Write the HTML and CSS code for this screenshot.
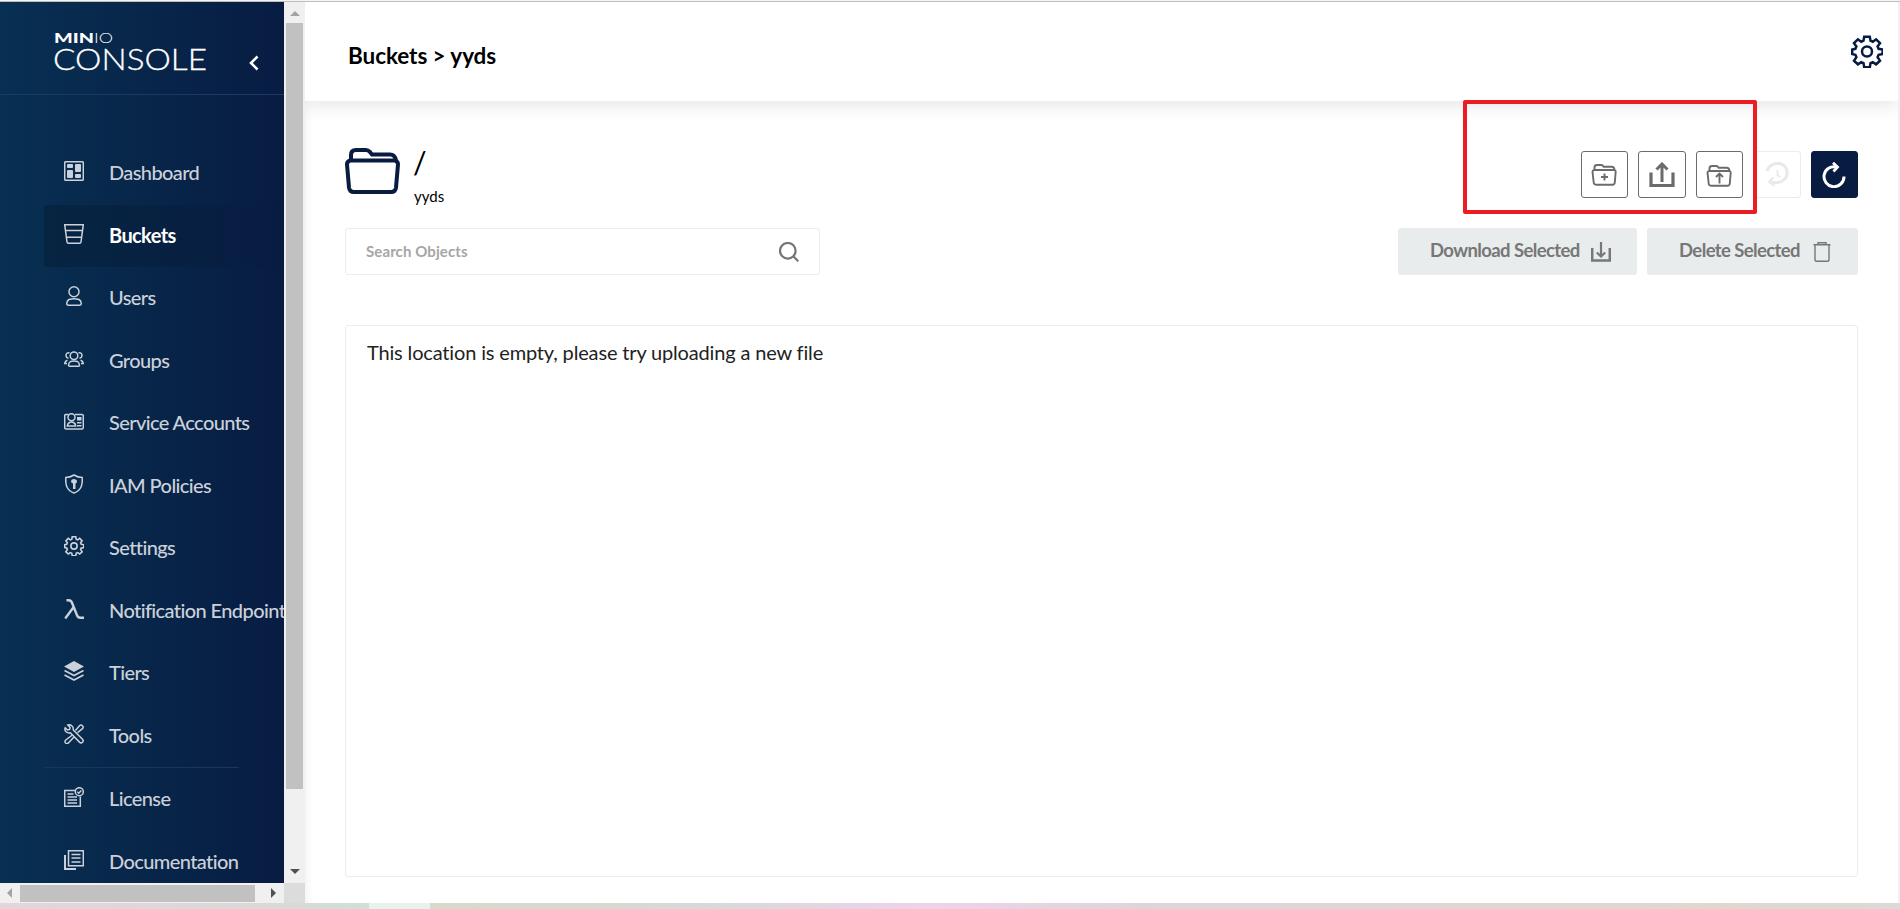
FILE: index.html
```html
<!DOCTYPE html>
<html lang="en">
<head>
  <meta charset="UTF-8" />
  <meta name="viewport" content="width=device-width, initial-scale=1.0" />
  <title>MinIO Console</title>
  <link rel="stylesheet" href="styles.css">
</head>
<body>
  <svg class="defs">
    <symbol id="gear" viewBox="0 0 32 32">
      <path d="M13.2 1.2h5.6l.7 4 2.3 1 3.3-2.4 3.9 3.9-2.4 3.3 1 2.3 4 .7v4.6l-4 .7-1 2.3 2.4 3.7-3.9 3.5-3.3-2.2-2.3 1-.7 4.2h-5.6l-.7-4.2-2.3-1-3.3 2.2L3 25.300l2.400-3.700-1-2.300-3.200-.7v-4.600l3.200-.7 1-2.300L3 7.700l3.900-3.900 3.300 2.400 2.300-1z"/>
      <circle cx="16" cy="16" r="5"/>
    </symbol>
    <symbol id="folder" viewBox="0 0 55 46">
      <path d="M6 13V7q0-5 5-5h10q2 0 4 2l2 2.500h18q5 0 6 6"/>
      <path d="M5 12.500h45q3 1 3 4l-2 23q-.5 4.500-5 4.500H9q-4.500 0-5-4.500l-2-23q0-3 3-4z"/>
    </symbol>
  </svg>

  <div class="app">
    <div class="sidebar">
      <div class="menu">
        <div class="logo">
          <svg width="152" height="40" viewBox="0 0 152 40">
            <text class="logoBold" x="-1" y="11" textLength="40" lengthAdjust="spacingAndGlyphs">MIN</text>
            <text class="logoThin" x="39" y="11" textLength="19" lengthAdjust="spacingAndGlyphs">IO</text>
            <text class="logoText" x="-2" y="38" textLength="154" lengthAdjust="spacingAndGlyphs">CONSOLE</text>
          </svg>
          <svg class="collapse" width="10" height="16" viewBox="0 0 10 16"><path d="M8.500 1.500 2 8l6.500 6.500"/></svg>
        </div>
        <div class="items">
          <div class="item">
            <svg viewBox="0 0 20 20"><rect x=".7" y=".7" width="18.600" height="18.600" rx="1"/><g class="fill"><rect x="3" y="3" width="6" height="4" rx="1"/><rect x="3" y="9" width="6" height="8" rx="1"/><rect x="11" y="3" width="6" height="8" rx="1"/><rect x="11" y="13" width="6" height="4" rx="1"/></g></svg>
            <span>Dashboard</span>
          </div>
          <div class="item active">
            <svg viewBox="0 0 20 20"><path d="M.7.700h18.600L17 18q-.2 1.300-1.500 1.300h-11Q3.200 19.300 3 18zM1.500 6.500h17M2.300 13.300h15.400"/></svg>
            <span>Buckets</span>
          </div>
          <div class="item">
            <svg viewBox="0 0 20 20"><circle cx="10" cy="5.800" r="5"/><path d="M5 13.500q5-1.500 10 0 2 1.200 2.300 4 0 1.700-1.700 1.700H4.400q-1.700 0-1.700-1.700.3-2.800 2.300-4z"/></svg>
            <span>Users</span>
          </div>
          <div class="item">
            <svg viewBox="0 0 20 20"><circle cx="10" cy="6.700" r="3.800"/><path d="M6.500 12.500q3.500-1 7 0 1.800 1.300 2 3.700 0 1-1 1h-9q-1 0-1-1 .2-2.400 2-3.700zM5.500 3.800q-3.500-.5-3.500 3 .3 2 2.500 2.400M14.500 3.800q3.500-.5 3.500 3-.3 2-2.500 2.400M3.500 11.300Q.8 12 .7 14.500H3M16.500 11.300q2.700.7 2.800 3.200H17"/></svg>
            <span>Groups</span>
          </div>
          <div class="item">
            <svg viewBox="0 0 20 20"><path d="M4.500 3.500H2Q.7 3.500.7 4.800v11.900q0 1.300 1.300 1.300h16q1.300 0 1.300-1.300V5q0-1.500-1.300-1.500h-7"/><circle cx="7.500" cy="6.200" r="3.500"/><path d="M5.500 11.500q2-.8 4 0 2 1 2.200 3.500h-8.400q.2-2.500 2.200-3.500z"/><path class="fill" d="M13 6h4.500v3.500H13zM13 11h4.500v1.500H13zM13 14h4.500v1.500H13z"/></svg>
            <span>Service Accounts</span>
          </div>
          <div class="item">
            <svg viewBox="0 0 20 20"><path d="M10 1Q6 3.400 1.800 3.500C1.300 12 3.300 16.500 10 19c6.700-2.500 8.700-7 8.200-15.500Q14 3.400 10 1z"/><path class="fill" d="M9 15V9.500Q7 9 7 7.200T9.500 5q3.500 0 3.500 2.500Q13 9 11.500 9.500V15z"/></svg>
            <span>IAM Policies</span>
          </div>
          <div class="item">
            <svg class="gearSmall"><use href="#gear"/></svg>
            <span>Settings</span>
          </div>
          <div class="item">
            <svg viewBox="0 0 20 20"><path class="thick" d="M2.500 1.200h2.200q2.300 0 3.300 2.500l5 12.500q1 2.500 3.200 2.500H20M9.700 8 1.200 19.500"/></svg>
            <span>Notification Endpoints</span>
          </div>
          <div class="item">
            <svg viewBox="0 0 20 20"><path class="fill" d="M10 0 20 5.500 10 11 0 5.500z"/><path d="m.5 9.500 9.500 5 9.500-5M.5 14l9.500 5 9.500-5" stroke-width="1.700"/></svg>
            <span>Tiers</span>
          </div>
          <div class="item">
            <svg viewBox="0 0 20 20"><path d="m6.300 8.800 9.200 9.300q1.500 1.500 3 .1 1.400-1.500 0-3L9.300 6Q9.600 3 7.500 1.500 5.500.3 3.800 1l2.300 2.500-.5 2-2 .5L1.200 3.800q-.8 2 .6 3.700 1.800 1.800 4.500 1.300z"/><path d="M11.500 6.500 15.500 1.700q1.500-1.500 3 0 1.400 1.300 0 3L13.500 8.700M8.300 11l-6.500 5q-1.700 1.500-.2 3 1.600 1.200 3-.3L10 13"/></svg>
            <span>Tools</span>
          </div>
          <div class="divider"></div>
          <div class="item">
            <svg viewBox="0 0 20 20"><path d="M11 3.500H.7v15.800h15.600V9.500"/><circle cx="15.300" cy="4.700" r="4"/><path d="m13.300 4.700 1.500 1.500 2.500-2.700M3.500 7h6M3.500 10h9.500M3.500 13h9.500M3.500 16h9.500"/></svg>
            <span>License</span>
          </div>
          <div class="item">
            <svg viewBox="0 0 20 20"><path d="M4.500.7h14.800v15.100H4.500zM7.500 4.500h9M7.500 8h9M7.500 12h9"/><path d="M1 5v14h11" stroke-width="2"/></svg>
            <span>Documentation</span>
          </div>
        </div>
      </div>
      <div class="scrollY">
        <i class="arrow up"></i>
        <div class="thumbY"></div>
        <i class="arrow down"></i>
      </div>
      <div class="scrollX">
        <i class="arrow left"></i>
        <div class="thumbX"></div>
        <i class="arrow right"></i>
      </div>
      <div class="corner"></div>
    </div>

    <div class="main">
      <div class="header">
        <h1>Buckets &gt; yyds</h1>
        <svg class="gearBig"><use href="#gear"/></svg>
      </div>
      <div class="content">
        <div class="titleRow">
          <svg class="bigFolder"><use href="#folder"/></svg>
          <div class="path">
            <div class="slash">/</div>
            <div class="bucket">yyds</div>
          </div>
          <div class="actions">
            <button class="iconBtn"><svg width="26" height="26" viewBox="0 0 26 26"><path d="M3.500 8V5.500Q3.500 3 6 3h4q1.300 0 2 1l.7.800h8q2.500 0 2.800 3M3 8h20.500q1.300.3 1.200 1.800l-.9 10.700q-.2 2.200-2.300 2.200H5q-2.100 0-2.300-2.200L1.500 9.800Q1.500 8.300 3 8zM13.500 11.500v7M10 15h7"/></svg></button>
            <button class="iconBtn wide"><svg width="26" height="26" viewBox="0 0 26 26"><path d="M2 10.500v13h22v-13" stroke-width="3.200"/><path d="M13 20V3M7.500 7.500 13 2l5.500 5.500" stroke-width="3"/></svg></button>
            <button class="iconBtn"><svg class="low" width="26" height="26" viewBox="0 0 26 26"><path d="M3.500 8V5.500Q3.500 3 6 3h4q1.300 0 2 1l.7.800h8q2.500 0 2.800 3M3 8h20.500q1.300.3 1.200 1.800l-.9 10.700q-.2 2.200-2.300 2.200H5q-2.100 0-2.300-2.200L1.500 9.800Q1.500 8.300 3 8z"/><path d="M13.500 20.500v-9M10 14l3.500-3.500L17 14" stroke-width="1.900"/></svg></button>
            <button class="iconBtn disabled"><svg width="26" height="26" viewBox="0 0 26 26"><path d="M3 9C6 0 18-1 22 6c4 9-4 17-15 14" stroke-width="3"/><path d="M9.500 15.500 5 20l5.500 4M13.500 8v5l3 2"/></svg></button>
            <button class="iconBtn primary"><svg width="26" height="26" viewBox="0 0 26 26"><path d="M15.500 5A10 10 0 1 0 23 14.500" stroke-width="3"/><path d="m12 .8 4.500 4.200-4 4.500" stroke-width="2.800"/></svg></button>
          </div>
        </div>
        <div class="toolbar">
          <div class="search">
            <input type="text" placeholder="Search Objects" />
            <svg width="20" height="20" viewBox="0 0 20 20"><circle cx="8.800" cy="8.800" r="7.800"/><path d="m14.300 14.300 5 5"/></svg>
          </div>
          <button class="btn download">Download Selected <svg width="20" height="20" viewBox="0 0 20 20"><path d="M1.200 6v12.500h17.600V6" stroke-width="2.500"/><path d="M10 0v14M5.800 10.500 10 14.500l4.200-4" stroke-width="2.200"/></svg></button>
          <button class="btn delete">Delete Selected <svg width="20" height="20" viewBox="0 0 20 20"><path d="M1.500 2.700h17M6 2V.8h8V2M3 3v14.500q0 1.800 1.800 1.800h10.400q1.800 0 1.800-1.800V3" stroke-width="1.400"/></svg></button>
        </div>
        <div class="list">This location is empty, please try uploading a new file</div>
      </div>
    </div>
  </div>
  <div class="desktop"></div>
  <div class="highlight"></div>
</body>
</html>
```
FILE: styles.css
```css
* {
  box-sizing: border-box;
}
html, body {
  margin: 0;
  padding: 0;
  height: 100%;
  overflow: hidden;
  background: #fff;
  font-family: Lato, "Liberation Sans", sans-serif;
}
body {
  display: flex;
  flex-direction: column;
}
svg {
  fill: none;
  stroke: currentColor;
  flex-shrink: 0;
}
.defs {
  display: none;
}
.app {
  height: 903px;
  display: flex;
  border-top: 1px solid #f5f5f5;
  box-shadow: inset 0 1px 0 #bebebe;
  padding-top: 1px;
}

/* sidebar */
.sidebar {
  width: 305px;
  flex-shrink: 0;
  display: grid;
  grid-template-columns: 284px 21px;
  grid-template-rows: 881px 20px;
}
.menu {
  overflow: hidden;
  background: linear-gradient(90deg, #073052 0%, #081c42 100%);
  color: #cbd1da;
}
.logo {
  height: 93px;
  border-bottom: 1px solid #1c3965;
  display: flex;
  align-items: flex-start;
  padding: 30px 0 0 55px;
}
.logo svg {
  stroke: none;
  overflow: visible;
}
.logo text {
  fill: #fff;
}
.logoBold {
  font: 900 13.5px Lato, sans-serif;
}
.logoThin {
  font: 300 13.5px Lato, sans-serif;
}
.logoText {
  font: 300 29.5px Lato, sans-serif;
  stroke: #fff;
  stroke-width: 0.3;
}
.logo .collapse {
  stroke: #fff;
  stroke-width: 2.6;
  margin: 23px 0 0 42px;
}
.items {
  padding: 47px 0 0 44px;
}
.item {
  height: 62.5px;
  display: flex;
  align-items: center;
  padding-left: 20px;
  font-size: 20px;
  font-weight: 500;
  letter-spacing: -0.6px;
  white-space: nowrap;
}
.item span {
  margin-bottom: 2px;
}
.item svg {
  width: 20px;
  height: 20px;
  margin: 0 25px 4px 0;
  stroke-width: 1.5;
}
.item .fill {
  fill: currentColor;
  stroke: none;
}
.item .thick {
  stroke-width: 2.4;
}
.item .gearSmall {
  stroke-width: 2.6;
}
.item.active {
  background: linear-gradient(90deg, #062541 0%, #081c42 100%);
}
.item.active span {
  color: #fff;
  font-weight: 700;
  margin-bottom: 1px;
}
.divider {
  width: 195px;
  height: 1px;
  background: #1c3559;
}

/* scrollbars */
.scrollY {
  background: #f0f0f0;
  display: flex;
  flex-direction: column;
  align-items: center;
}
.thumbY {
  width: 17px;
  height: 766px;
  margin: 7px 0 80px;
  background: #c1c1c1;
}
.scrollX {
  background: #f0f0f0;
  display: flex;
  align-items: center;
}
.thumbX {
  width: 235px;
  height: 17px;
  margin: 0 16px 0 8px;
  background: #c1c1c1;
}
.corner {
  background: #dcdcdc;
}
.arrow {
  border: 5px solid transparent;
}
.up {
  border-width: 0 5px 5px;
  border-bottom-color: #a3a3a3;
  margin-top: 9px;
}
.down {
  border-width: 5px 5px 0;
  border-top-color: #505050;
}
.left {
  border-width: 5px 5px 5px 0;
  border-right-color: #a3a3a3;
  margin-left: 7px;
}
.right {
  border-width: 5px 0 5px 5px;
  border-left-color: #505050;
}

/* main */
.main {
  flex: 1;
  border-right: 2px solid #f0f0f0;
  box-shadow: inset 8px 0 8px -6px rgba(0, 0, 0, 0.06);
}
.header {
  height: 99px;
  padding: 0 15px 0 43px;
  display: flex;
  justify-content: space-between;
  background: #fff;
  box-shadow: 0 6px 16px rgba(0, 0, 0, 0.09);
  clip-path: inset(0 0 -24px 0);
}
h1 {
  margin: 40px 0 0;
  font-size: 22.5px;
  line-height: 27px;
  font-weight: 700;
  letter-spacing: -0.08px;
  color: #000;
}
.gearBig {
  width: 32px;
  height: 33px;
  margin-top: 33px;
  color: #081c42;
  stroke-width: 2.5;
}
.content {
  padding: 46px 40px 0;
}
.titleRow {
  display: flex;
  height: 81px;
}
.bigFolder {
  width: 55px;
  height: 46px;
  color: #081c42;
  stroke-width: 4;
  margin-top: 1px;
}
.path {
  margin-left: 13px;
  color: #000;
}
.slash {
  font-size: 30px;
  line-height: 30px;
}
.bucket {
  font-size: 15px;
  line-height: 18px;
  margin: 10px 0 0 1px;
}
.actions {
  margin: 4px 0 0 auto;
  display: flex;
  gap: 10px;
}
.iconBtn {
  width: 47px;
  height: 47px;
  padding: 0 1px 0 0;
  display: flex;
  align-items: center;
  justify-content: center;
  background: #fff;
  border: 1px solid #6b6b6b;
  border-radius: 3px;
  color: #6b6b6b;
  stroke-width: 1.9;
}
.iconBtn.wide {
  width: 48px;
}
.iconBtn .low {
  margin-top: 3px;
}
.iconBtn.disabled {
  width: 48px;
  border-color: #ececec;
  color: #e9e9e9;
}
.iconBtn.primary {
  background: #081c42;
  border-color: #081c42;
  color: #fff;
}
.toolbar {
  display: flex;
}
.search {
  width: 475px;
  height: 47px;
  margin-right: auto;
  padding: 0 20px;
  display: flex;
  align-items: center;
  border: 1px solid #eaedee;
  border-radius: 3px;
  color: #757575;
  stroke-width: 2.2;
}
.search input {
  flex: 1;
  border: none;
  padding: 0 0 2px;
  background: none;
  font: 700 15px Lato, sans-serif;
  letter-spacing: 0.1px;
}
.search input::placeholder {
  color: #a6a6a6;
}
.btn {
  height: 47px;
  display: flex;
  align-items: center;
  justify-content: space-between;
  border: none;
  border-radius: 3px;
  background: #e8eced;
  color: #777;
  font: 700 18.5px Lato, sans-serif;
  letter-spacing: -0.6px;
  white-space: nowrap;
  padding: 0 26px 3px 32px;
}
.btn svg {
  margin-top: 4px;
}
.download {
  width: 239px;
  margin-right: 10px;
}
.delete {
  width: 211px;
}
.list {
  height: 552px;
  margin-top: 50px;
  padding: 14px 21px;
  border: 1px solid #eaedee;
  border-radius: 3px;
  font-size: 20px;
  letter-spacing: -0.16px;
  line-height: 25px;
  color: #222;
}

.desktop {
  height: 6px;
  background: linear-gradient(90deg, #e4d5da 0, #dcd8d8 260px, #d0dfd8 369px, #e8f2ec 369px, #e8f2ec 430px, #d5dacb 430px, #d9d8da 720px, #efd2e9 930px, #ddd5d8 1150px, #dfd5d4 1560px, #dfd7cf 1720px, #dcd9d8 1900px);
}
.highlight {
  position: absolute;
  left: 1463px;
  top: 100px;
  width: 294px;
  height: 114px;
  border: 4px solid #ed1c24;
  border-radius: 2px;
}
```
